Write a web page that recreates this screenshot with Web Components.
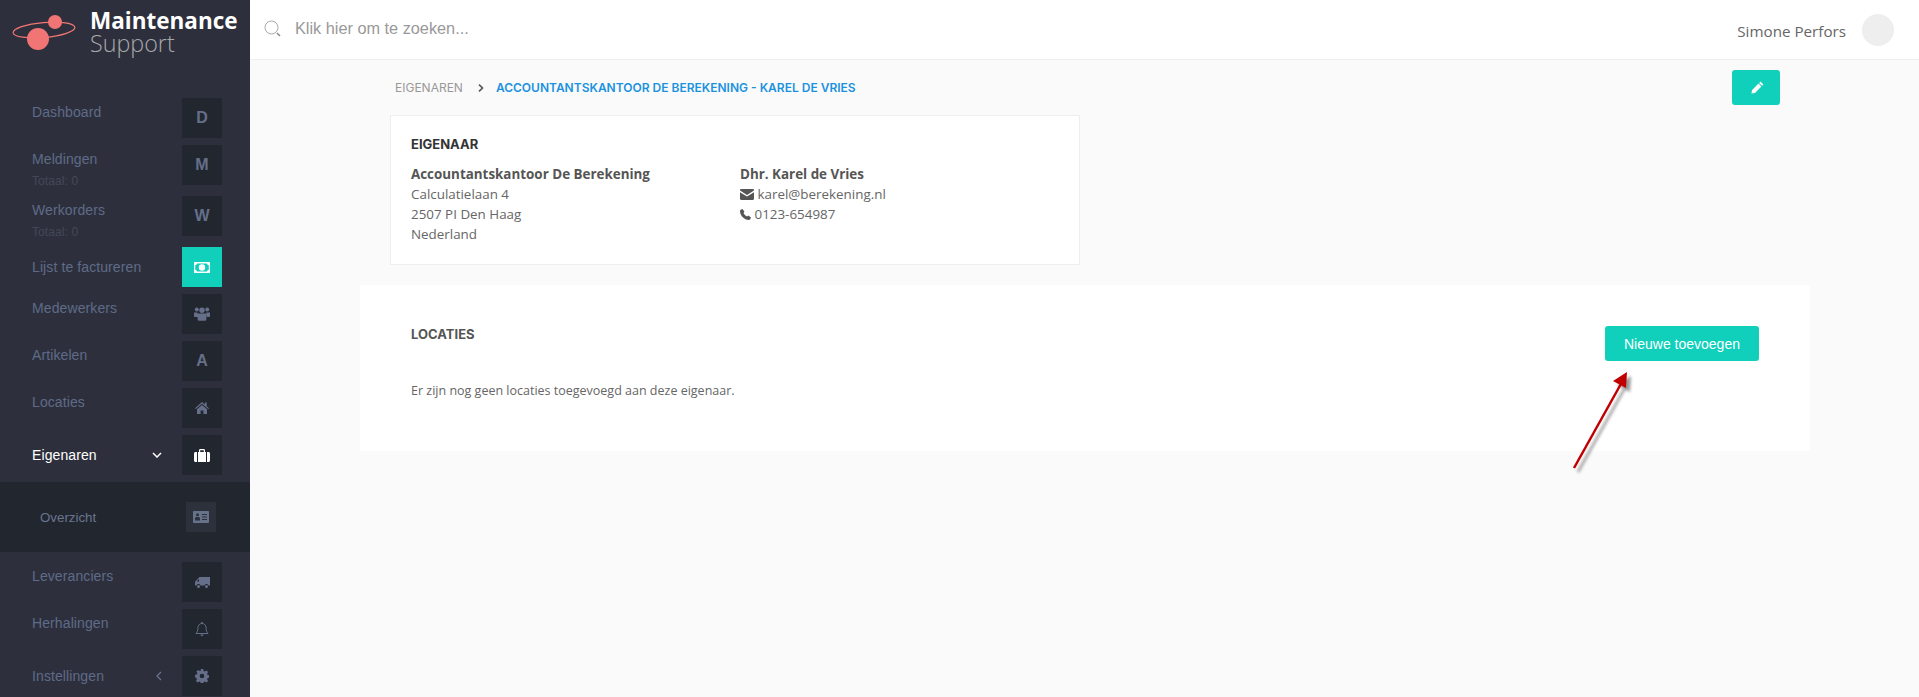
<!DOCTYPE html>
<html lang="nl">
<head>
<meta charset="utf-8">
<title>Eigenaar</title>
<style>
    html, body { margin: 0; height: 100%; overflow: hidden; background: #fafafa; }
</style>
</head>
<body>
<app-shell>
    <side-nav slot="nav">
        <nav-item label="Dashboard" top><tile-box>D</tile-box></nav-item>
        <nav-item label="Meldingen" sub="Totaal: 0" top><tile-box>M</tile-box></nav-item>
        <nav-item label="Werkorders" sub="Totaal: 0" top><tile-box>W</tile-box></nav-item>
        <nav-item label="Lijst te factureren"><tile-box active><svg width="16" height="11" viewBox="0 0 16 11"><path fill="#fff" fill-rule="evenodd" d="M0 0h16v11H0zM3 1.5A2 2 0 0 1 1.2 3.3v4.4A2 2 0 0 1 3 9.5h10a2 2 0 0 1 1.8-1.8V3.300A2 2 0 0 1 13 1.500zM8 2.300a3.200 3.200 0 1 1 0 6.400 3.200 3.200 0 0 1 0-6.400z"/><path fill="#fff" d="M7 4h2v3.500H7z"/></svg></tile-box></nav-item>
        <nav-item label="Medewerkers" top><tile-box><svg width="16" height="14" viewBox="0 0 16 14"><g fill="currentColor"><circle cx="2.800" cy="2.600" r="2"/><circle cx="13.200" cy="2.600" r="2"/><circle cx="8" cy="3.200" r="2.700"/><path d="M0 5.500h3.600l.4 4.500H1.200C.5 10 0 9.600 0 8.900zM16 5.500h-3.600L12 10h2.800c.7 0 1.200-.4 1.200-1.100zM4.600 6.500h6.800c.7 0 1 .5 1 1.200v4.600c0 .9-.6 1.500-1.400 1.500H5c-.8 0-1.400-.6-1.400-1.500V7.700c0-.7.300-1.200 1-1.200z"/></g></svg></tile-box></nav-item>
        <nav-item label="Artikelen" top><tile-box>A</tile-box></nav-item>
        <nav-item label="Locaties" top><tile-box><svg width="14" height="12" viewBox="0 0 14 12"><path fill="currentColor" d="M7 0l2.800 2.500V.6h1.900v3.600L14 6.200l-.8.900L7 1.700.8 7.100 0 6.200zM7 3l5 4.300V12H8.400V8.500H5.600V12H2V7.300z"/></svg></tile-box></nav-item>
        <nav-item label="Eigenaren" open chevron="down"><tile-box><svg width="16" height="13" viewBox="0 0 16 13"><path fill="#fff" fill-rule="evenodd" d="M5 3V1.300C5 .6 5.600 0 6.300 0h3.400C10.400 0 11 .6 11 1.300V3h3.500c.8 0 1.500.7 1.500 1.500v7c0 .8-.7 1.500-1.500 1.500h-13C.7 13 0 12.300 0 11.500v-7C0 3.700.7 3 1.500 3zM6.200 3h3.600V1.200H6.200zM3 3v10h1V3zM12 3v10h1V3z"/></svg></tile-box></nav-item>
        <sub-menu label="Overzicht"><svg width="16" height="12" viewBox="0 0 16 12"><path fill="currentColor" fill-rule="evenodd" d="M1 0h14c.6 0 1 .4 1 1v10c0 .6-.4 1-1 1H1c-.6 0-1-.4-1-1V1c0-.6.4-1 1-1zM4.500 2.200a1.500 1.500 0 1 0 0 3 1.500 1.500 0 0 0 0-3zM2 9.500h5V7.600C7 6.700 6.400 6 5.500 6h-2C2.600 6 2 6.700 2 7.600zM9 3v1h5V3zM9 5.500v1h5v-1zM9 8v1h5V8z"/></svg></sub-menu>
        <nav-item label="Leveranciers" top><tile-box><svg width="15" height="11" viewBox="0 0 15 11"><path fill="currentColor" fill-rule="evenodd" d="M4.500 0H15v8.500h-1.600a2 2 0 0 0-3.800 0H5.400a2 2 0 0 0-3.800 0H0V4.800zM4 1.700L1.800 4.400H4zM3.500 8a1.500 1.500 0 1 1 0 3 1.500 1.500 0 0 1 0-3zM11.500 8a1.500 1.500 0 1 1 0 3 1.500 1.500 0 0 1 0-3z"/></svg></tile-box></nav-item>
        <nav-item label="Herhalingen" top><tile-box><svg width="14" height="15" viewBox="0 0 14 15"><path fill="none" stroke="currentColor" stroke-width="1" d="M7 1.500c2.500 0 4 1.800 4 4 0 3.500 1 4.500 2 6H1c1-1.500 2-2.500 2-6 0-2.200 1.500-4 4-4z"/><path fill="currentColor" d="M6.200 0h1.600v1.600H6.200zM5.500 12.500h3a1.500 1.500 0 0 1-3 0z"/></svg></tile-box></nav-item>
        <nav-item label="Instellingen" chevron="left"><tile-box><svg width="14" height="14" viewBox="0 0 14 14"><path fill="currentColor" fill-rule="evenodd" d="M5.800 0h2.400l.4 1.900 1.100.5 1.700-1 1.700 1.700-1 1.700.5 1.100 1.900.4v2.400l-1.900.4-.5 1.100 1 1.700-1.700 1.700-1.700-1-1.100.5-.4 1.900H5.800l-.4-1.900-1.100-.5-1.700 1-1.700-1.700 1-1.700-.5-1.100L0 8.200V5.800l1.900-.4.5-1.100-1-1.700 1.700-1.700 1.700 1 1.100-.5zM7 4.700a2.300 2.300 0 1 0 0 4.600 2.300 2.300 0 0 0 0-4.600z"/></svg></tile-box></nav-item>
    </side-nav>
    <top-bar slot="top"></top-bar>
    <crumb-bar></crumb-bar>
    <owner-card></owner-card>
    <locations-panel></locations-panel>
    <hint-arrow slot="overlay"></hint-arrow>
</app-shell>

<script>
    class AppShell extends HTMLElement {
        constructor() {
            super();
            this.attachShadow({ mode: 'open' });
            this.shadowRoot.innerHTML = `
                <style>
                    :host { display: flex; position: relative; height: 697px; overflow: hidden; background: #fafafa; }
                    .main { flex: 1; min-width: 0; display: flex; flex-direction: column; }
                    .content { display: flex; flex-direction: column; padding: 0 109px 0 110px; }
                </style>
                <slot name="nav"></slot>
                <div class="main">
                    <slot name="top"></slot>
                    <div class="content"><slot></slot></div>
                </div>
                <slot name="overlay"></slot>
            `;
        }
    }

    class SideNav extends HTMLElement {
        constructor() {
            super();
            this.attachShadow({ mode: 'open' });
            this.shadowRoot.innerHTML = `
                <style>
                    :host { display: block; width: 250px; height: 697px; flex: none; background: #2d303c; font-family: "Liberation Sans", Arial, sans-serif; }
                    .logo { display: flex; height: 98px; box-sizing: border-box; padding: 0 0 0 12px; }
                    svg { margin-top: 13px; flex: none; }
                    .name { margin: 10px 0 0 12px; font-family: "Open Sans", sans-serif; font-size: 22.500px; line-height: 22px; }
                    .name b { display: block; color: #fff; font-weight: 700; }
                    .name span { display: block; color: #a8a8ac; font-weight: 300; font-size: 23.300px; }
                </style>
                <div class="logo">
                    <svg width="66" height="40" viewBox="0 0 66 40">
                        <ellipse cx="32" cy="17" rx="31" ry="7.500" transform="rotate(-5 32 17)" fill="none" stroke="#f27575" stroke-width="1.200"/>
                        <circle cx="26" cy="26" r="11" fill="#f27575"/>
                        <circle cx="43" cy="9" r="7" fill="#f27575"/>
                    </svg>
                    <div class="name"><b>Maintenance</b><span>Support</span></div>
                </div>
                <slot></slot>
            `;
        }
    }

    class NavItem extends HTMLElement {
        constructor() {
            super();
            this.attachShadow({ mode: 'open' });
            const sub = this.getAttribute('sub');
            const chevron = this.getAttribute('chevron');
            let chevronSvg = '';
            if (chevron === 'down') chevronSvg = '<svg class="chev" width="10" height="6" viewBox="0 0 10 6"><path d="M1 1l4 4 4-4" fill="none" stroke="#fff" stroke-width="1.500"/></svg>';
            if (chevron === 'left') chevronSvg = '<svg class="chev" width="6" height="10" viewBox="0 0 6 10"><path d="M5 1L1 5l4 4" fill="none" stroke="#6b7590" stroke-width="1.200"/></svg>';
            this.shadowRoot.innerHTML = `
                <style>
                    :host { display: flex; align-items: center; height: 40px; margin-bottom: 7px; padding-left: 32px; font-size: 14px; line-height: 20px; letter-spacing: .1px; color: #5f6b88; }
                    :host([sub]) { margin-bottom: 11px; }
                    :host([top]) { align-items: flex-start; }
                    :host([open]) { color: #fff; }
                    .text { width: 150px; flex: none; display: flex; align-items: center; justify-content: space-between; padding-right: 20px; box-sizing: border-box; }
                    :host([top]) .text { display: block; padding-top: 4px; }
                    .sub { display: block; margin-top: 6px; font-size: 12px; line-height: 12px; color: #434757; }
                    .chev { flex: none; }
                </style>
                <div class="text"><span>${this.getAttribute('label')}${sub ? `<span class="sub">${sub}</span>` : ''}</span>${chevronSvg}</div>
                <slot></slot>
            `;
        }
    }

    class TileBox extends HTMLElement {
        constructor() {
            super();
            this.attachShadow({ mode: 'open' });
            this.shadowRoot.innerHTML = `
                <style>
                    :host { display: flex; align-items: center; justify-content: center; width: 40px; height: 40px; flex: none; background: #22262f; color: #666f8a; font-size: 16px; font-weight: 700; }
                    :host([active]) { background: #10d0bb; }
                </style>
                <slot></slot>
            `;
        }
    }

    class SubMenu extends HTMLElement {
        constructor() {
            super();
            this.attachShadow({ mode: 'open' });
            this.shadowRoot.innerHTML = `
                <style>
                    :host { display: flex; align-items: center; height: 70px; margin-bottom: 10px; padding-left: 40px; background: #22262f; font-size: 13.300px; color: #6b7590; }
                    span { width: 146px; }
                    .icon { display: flex; align-items: center; justify-content: center; width: 30px; height: 30px; background: #2d313c; color: #68718a; }
                </style>
                <span>${this.getAttribute('label')}</span>
                <div class="icon"><slot></slot></div>
            `;
        }
    }

    class TopBar extends HTMLElement {
        constructor() {
            super();
            this.attachShadow({ mode: 'open' });
            this.shadowRoot.innerHTML = `
                <style>
                    :host { display: flex; align-items: center; height: 59px; flex: none; padding: 0 25px 0 14px; box-sizing: content-box; background: #fff; border-bottom: 1px solid #eee; }
                    svg { flex: none; margin-top: -3px; }
                    .search { flex: 1; margin: -2px 0 0 14px; font: 16.300px "Liberation Sans", Arial, sans-serif; color: #999; }
                    .user { font: 15.200px "Open Sans", sans-serif; color: #666; margin-top: 2px; }
                    .avatar { width: 32px; height: 32px; margin-left: 16px; border-radius: 50%; background: #eee; }
                </style>
                <svg width="17" height="17" viewBox="0 0 17 17"><circle cx="7.500" cy="7.500" r="6.500" fill="none" stroke="#aaa" stroke-width="1"/><path d="M13 13l3 3" stroke="#888" stroke-width="1.500"/></svg>
                <div class="search">Klik hier om te zoeken...</div>
                <div class="user">Simone Perfors</div>
                <div class="avatar"></div>
            `;
        }
    }

    class CrumbBar extends HTMLElement {
        constructor() {
            super();
            this.attachShadow({ mode: 'open' });
            this.shadowRoot.innerHTML = `
                <style>
                    :host { display: flex; align-items: center; height: 45px; padding: 10px 30px 0 35px; box-sizing: border-box; font: 12px Inter, sans-serif; }
                    .root { color: #999; }
                    svg { margin: 0 12px 0 15px; flex: none; }
                    .now { flex: 1; color: #1b92e0; font-weight: 600; }
                    .edit { display: flex; align-items: center; justify-content: center; width: 48px; height: 35px; border-radius: 3px; background: #10d0bb; }
                </style>
                <span class="root">EIGENAREN</span>
                <svg width="6" height="8" viewBox="0 0 6 8"><path d="M1 .7L4.500 4 1 7.300" fill="none" stroke="#555" stroke-width="1.600"/></svg>
                <span class="now">ACCOUNTANTSKANTOOR DE BEREKENING - KAREL DE VRIES</span>
                <div class="edit"><svg width="13" height="13" viewBox="0 0 13 13"><path fill="#fff" d="M9.500.6l2.900 2.900-1.300 1.300-2.900-2.900zM7.500 2.600l2.900 2.900-6.400 6.400-3.600.7.700-3.600z"/></svg></div>
            `;
        }
    }

    class OwnerCard extends HTMLElement {
        constructor() {
            super();
            this.attachShadow({ mode: 'open' });
            this.shadowRoot.innerHTML = `
                <style>
                    :host { display: block; width: 690px; height: 150px; margin: 10px 0 20px 30px; padding: 20px; box-sizing: border-box; background: #fff; border: 1px solid #eee; font: 13.400px/20px "Open Sans", sans-serif; color: #666; }
                    h2 { margin: 0 0 12px; font: 700 13px/16px Inter, sans-serif; color: #333; }
                    .cols { display: flex; }
                    .cols > div:first-child { width: 329px; }
                    b { display: block; color: #555; }
                    svg { vertical-align: -1px; }
                </style>
                <h2>EIGENAAR</h2>
                <div class="cols">
                    <div>
                        <b>Accountantskantoor De Berekening</b>
                        Calculatielaan 4<br>2507 PI Den Haag<br>Nederland
                    </div>
                    <div>
                        <b>Dhr. Karel de Vries</b>
                        <svg width="14" height="11" viewBox="0 0 14 11"><path fill="#555" d="M1.200 0h11.600C13.500 0 14 .5 14 1.200v.4L7 6 0 1.600v-.4C0 .5.500 0 1.200 0zM0 3.200l7 4.400 7-4.400v6.600c0 .7-.5 1.200-1.200 1.200H1.200C.5 11 0 10.500 0 9.800z"/></svg>
                        karel@berekening.nl<br>
                        <svg width="11" height="11" viewBox="0 0 11 11"><path fill="#555" d="M2.500 0l2 2.700-1 1.300c.6 1.400 2 2.800 3.500 3.500l1.300-1 2.700 2-.8 1.800c-.3.500-.8.700-1.400.7C4.300 10.800.2 6.700 0 2.200c0-.6.200-1.100.7-1.400z"/></svg>
                        0123-654987
                    </div>
                </div>
            `;
        }
    }

    class LocationsPanel extends HTMLElement {
        constructor() {
            super();
            this.attachShadow({ mode: 'open' });
            this.shadowRoot.innerHTML = `
                <style>
                    :host { display: block; height: 166px; padding: 41px 51px 0 51px; box-sizing: border-box; background: #fff; font: 12.500px/18px "Open Sans", sans-serif; color: #666; }
                    .head { display: flex; justify-content: space-between; align-items: flex-start; height: 56px; }
                    h2 { margin: 0; font: 700 13px/16px Inter, sans-serif; color: #555; }
                    button { width: 154px; height: 35px; margin-right: 0; border: 0; border-radius: 3px; background: #10d0bb; color: #fff; font: 14px "Liberation Sans", Arial, sans-serif; }
                    p { margin: 0; }
                </style>
                <div class="head"><h2>LOCATIES</h2><button>Nieuwe toevoegen</button></div>
                <p>Er zijn nog geen locaties toegevoegd aan deze eigenaar.</p>
            `;
        }
    }

    class HintArrow extends HTMLElement {
        constructor() {
            super();
            this.attachShadow({ mode: 'open' });
            this.shadowRoot.innerHTML = `
                <style>
                    :host { position: absolute; left: 1564px; top: 362px; width: 80px; height: 120px; }
                </style>
                <svg width="80" height="120" viewBox="0 0 80 120">
                    <defs><filter id="b" x="-30%" y="-30%" width="160%" height="160%"><feGaussianBlur stdDeviation="1.500"/></filter></defs>
                    <g transform="translate(4 4)" fill="#777" stroke="#777" opacity=".75" filter="url(#b)">
                        <path d="M10 106L58 20" fill="none" stroke-width="2.500"/>
                        <path d="M63 10l-1 16-13-7z" stroke="none"/>
                    </g>
                    <path d="M10 106L58 20" fill="none" stroke="#c00000" stroke-width="2.500"/>
                    <path d="M63 10l-1 16-13-7z" fill="#c00000"/>
                </svg>
            `;
        }
    }

    customElements.define('app-shell', AppShell);
    customElements.define('side-nav', SideNav);
    customElements.define('nav-item', NavItem);
    customElements.define('tile-box', TileBox);
    customElements.define('sub-menu', SubMenu);
    customElements.define('top-bar', TopBar);
    customElements.define('crumb-bar', CrumbBar);
    customElements.define('owner-card', OwnerCard);
    customElements.define('locations-panel', LocationsPanel);
    customElements.define('hint-arrow', HintArrow);
</script>
</body>
</html>
